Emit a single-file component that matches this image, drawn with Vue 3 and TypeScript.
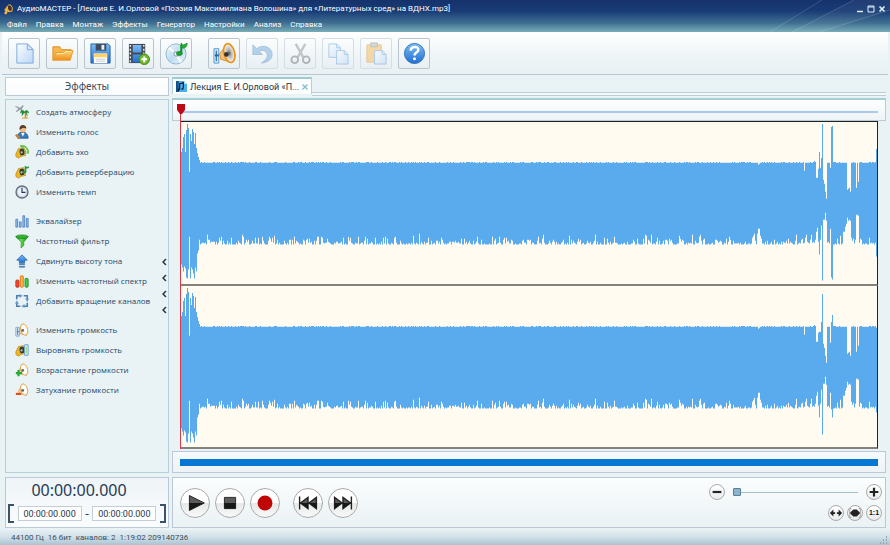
<script setup lang="ts">
import { ref } from 'vue'

interface Tool { id: string; label: string; disabled?: boolean }
interface Effect { icon: string; label: string }
interface Channel { name: string; path: string }
type Column = [number, number]

const menu = ['Файл', 'Правка', 'Монтаж', 'Эффекты', 'Генератор', 'Настройки', 'Анализ', 'Справка']

const toolGroups: Tool[][] = [
  [
    { id: 'new', label: 'Создать' },
    { id: 'open', label: 'Открыть' },
    { id: 'save', label: 'Сохранить' },
    { id: 'video', label: 'Извлечь звук из видео' },
    { id: 'cd', label: 'Загрузить с диска' },
  ],
  [
    { id: 'volume', label: 'Громкость' },
    { id: 'undo', label: 'Отменить', disabled: true },
    { id: 'cut', label: 'Вырезать', disabled: true },
    { id: 'copy', label: 'Копировать', disabled: true },
    { id: 'paste', label: 'Вставить', disabled: true },
    { id: 'help', label: 'Справка' },
  ],
]

const effectGroups: Effect[][] = [
  [
    { icon: 'palm', label: 'Создать атмосферу' },
    { icon: 'person', label: 'Изменить голос' },
    { icon: 'echo', label: 'Добавить эхо' },
    { icon: 'reverb', label: 'Добавить реверберацию' },
    { icon: 'clock', label: 'Изменить темп' },
  ],
  [
    { icon: 'equalizer', label: 'Эквалайзер' },
    { icon: 'funnel', label: 'Частотный фильтр' },
    { icon: 'pitch', label: 'Сдвинуть высоту тона' },
    { icon: 'spectrum', label: 'Изменить частотный спектр' },
    { icon: 'rotate', label: 'Добавить вращение каналов' },
  ],
  [
    { icon: 'vol-change', label: 'Изменить громкость' },
    { icon: 'vol-level', label: 'Выровнять громкость' },
    { icon: 'vol-up', label: 'Возрастание громкости' },
    { icon: 'vol-down', label: 'Затухание громкости' },
  ],
]

const rangeStart = ref('00:00:00.000')
const rangeEnd = ref('00:00:00.000')
const zoom = ref(0)

const WIDTH = 696
const HEIGHT = 162

const intro: Column[] = [
  [30, 143], [26, 146], [15, 150], [12, 145], [30, 147], [8, 156], [2, 157], [6, 148], [50, 115],
  [12, 157], [19, 146], [7, 148], [10, 152], [22, 157], [11, 146], [26, 150], [31, 132], [35, 129], [38, 118],
]

const accents: Record<number, Column> = {
  571: [41, 116], 572: [41, 114], 573: [41, 112], 576: [41, 112], 577: [43, 107], 578: [42, 107], 579: [41, 114], 580: [41, 117],
  623: [49, 121], 633: [39, 121], 635: [56, 110], 636: [56, 106], 637: [47, 120], 638: [30, 133],
  639: [46, 118], 640: [36, 104], 641: [2, 159], 642: [58, 98], 643: [62, 98], 644: [70, 91],
  645: [77, 99], 646: [41, 121], 647: [41, 120], 649: [46, 107], 650: [5, 156], 651: [4, 158],
  656: [41, 117], 659: [41, 114], 662: [41, 110], 663: [41, 110], 664: [41, 105], 665: [41, 102],
  666: [68, 96], 667: [67, 99], 668: [66, 98], 669: [70, 99], 670: [41, 116],
  675: [66, 93], 676: [41, 93], 677: [60, 94], 695: [27, 135],
}

const secondChannel: Record<number, Column> = {
  638: [46, 132], 641: [8, 149], 649: [57, 107], 650: [36, 124], 651: [29, 132], 695: [42, 127],
}

function buildWave(overrides: Record<number, Column>): string {
  let seed = 4217
  const random = (): number => {
    seed = (seed * 16807) % 2147483647
    return seed / 2147483647
  }
  let upper = ''
  let lower = ''
  for (let x = 0; x < WIDTH; x++) {
    const crest = random() > 0.7 ? 40 : 41
    const dip = random() ** 3 * (5 + 7 * random())
    const regular: Column = [crest, 123 - Math.round(dip)]
    const [top, bottom] = overrides[x] ?? accents[x] ?? intro[x] ?? regular
    upper += `V${top}h1`
    lower = `V${bottom}h-1` + lower
  }
  return `M0 80${upper}${lower}z`
}

const channels: Channel[] = [
  { name: 'Левый канал', path: buildWave({}) },
  { name: 'Правый канал', path: buildWave(secondChannel) },
]
</script>

<template>
  <div class="app">
    <svg class="sprite" aria-hidden="true">
      <defs>
        <linearGradient id="g-blue" x1="0" y1="0" x2="0" y2="1"><stop offset="0" stop-color="#7dbcf5" /><stop offset="1" stop-color="#1e6fd2" /></linearGradient>
        <linearGradient id="g-page" x1="0" y1="0" x2="1" y2="1"><stop offset="0" stop-color="#fafdff" /><stop offset="1" stop-color="#bcd7f6" /></linearGradient>
        <linearGradient id="g-orange" x1="0" y1="0" x2="0" y2="1"><stop offset="0" stop-color="#ffd778" /><stop offset="1" stop-color="#ef8d17" /></linearGradient>
        <linearGradient id="g-disc" x1="0" y1="0" x2="1" y2="1"><stop offset="0" stop-color="#f7fbfe" /><stop offset=".5" stop-color="#b9dcf2" /><stop offset="1" stop-color="#f2f7fb" /></linearGradient>
        <linearGradient id="g-green" x1="0" y1="0" x2="1" y2="0"><stop offset="0" stop-color="#0f8d13" /><stop offset=".4" stop-color="#6be34e" /><stop offset="1" stop-color="#0b8714" /></linearGradient>
        <radialGradient id="g-cone"><stop offset="0" stop-color="#555" /><stop offset=".3" stop-color="#aaa" /><stop offset="1" stop-color="#fff" /></radialGradient>
      </defs>
      <symbol id="i-new" viewBox="0 0 24 24"><path d="M4 2h11l6 6v14H4z" fill="url(#g-page)" stroke="#7da8dc" /><path d="M15 2v6h6z" fill="#dcebfb" stroke="#7da8dc" /></symbol>
      <symbol id="i-open" viewBox="0 0 24 24"><path d="M2 19V5h7l2 3h10v4" fill="#f8b64b" stroke="#dd8d25" /><path d="M2 19 5 11h8l2-2h8l-3 10z" fill="url(#g-orange)" stroke="#e89a31" /><path d="m6 12h7l2-2h6" fill="none" stroke="#fff0b5" /></symbol>
      <symbol id="i-save" viewBox="0 0 24 24"><path d="M2 2h18l2 2v18H2z" fill="url(#g-blue)" stroke="#2864a8" /><path d="M7 2h11v7H7z" fill="#3f4d5e" /><path d="M13 3h3v5h-3z" fill="#e8eef5" /><path d="M5 12h14v10H5z" fill="#fff" /><path d="M5 12h14v4H5z" fill="#ffd36c" /><path d="M7 18h10M7 20h10" stroke="#c4cad0" /></symbol>
      <symbol id="i-video" viewBox="0 0 24 24"><path d="M2 2h17v20H2z" fill="#454b55" /><path d="M6 3h9v8H6zM6 13h9v8H6z" fill="url(#g-blue)" /><path d="M3.500 3v19M17.500 3v19" stroke="#e7edf2" stroke-width="1.500" stroke-dasharray="2 2" /><circle cx="18" cy="18" r="5.500" fill="#72b72b" stroke="#3f8613" /><path d="M18 15v6M15 18h6" stroke="#fff" stroke-width="2" /></symbol>
      <symbol id="i-cd" viewBox="0 0 24 24"><circle cx="11.500" cy="12.500" r="10.500" fill="url(#g-disc)" stroke="#8fb4c9" /><path d="m11 12-7-6M11 13l6 8" stroke="#fff" stroke-width="2" /><circle cx="11.500" cy="12.500" r="3.500" fill="#8dadbf" stroke="#eef" /><circle cx="11.500" cy="12.500" r="1.500" fill="#fff" /><path d="M17 3v9" stroke="#128b20" stroke-width="2" /><path d="M17 1c1 4 5 1 6 0 0 4-2 6-6 5z" fill="#25b733" stroke="#128b20" /><ellipse cx="15" cy="12" rx="3" ry="2" fill="#21a52d" stroke="#128b20" /></symbol>
      <symbol id="i-volume" viewBox="0 0 24 24"><path d="M7 12 15 2l3 19-10-3z" fill="#f1c179" stroke="#d98b2c" /><ellipse cx="17" cy="11.500" rx="5.500" ry="10" transform="rotate(-14 17 11.500)" fill="url(#g-cone)" stroke="#e99318" stroke-width="1.800" /><circle cx="14" cy="13" r="2.500" fill="#333" /><path d="M1 7h5v15H1z" fill="#d8ecfa" stroke="#5698ce" /><path d="M3.500 9v11" stroke="#367db9" stroke-width="1.500" /><path d="M2 14h4" stroke="#25619c" stroke-width="2" /></symbol>
      <symbol id="i-undo" viewBox="0 0 24 24"><path d="M2 3v10h10l-4-3c5-3 9 0 9 4 0 3-2 5-6 8 7-1 11-4 11-9C22 5 12 2 6 7z" fill="#76acdf" stroke="#5a91c6" /></symbol>
      <symbol id="i-cut" viewBox="0 0 24 24"><path d="m7 2 8 14M17 2 9 16" stroke="#8d9499" stroke-width="2.400" /><circle cx="6" cy="18.500" r="3.500" fill="none" stroke="#72797f" stroke-width="2" /><circle cx="18" cy="18.500" r="3.500" fill="none" stroke="#72797f" stroke-width="2" /></symbol>
      <symbol id="i-copy" viewBox="0 0 24 24"><path d="M2 2h8l4 4v10H2z" fill="url(#g-page)" stroke="#659fdd" /><path d="M10 2v4h4" fill="none" stroke="#659fdd" /><path d="M10 9h8l4 4v10H10z" fill="url(#g-page)" stroke="#659fdd" /><path d="M18 9v4h4" fill="none" stroke="#659fdd" /></symbol>
      <symbol id="i-paste" viewBox="0 0 24 24"><path d="M2 3h15v18H2z" fill="#f5bb55" stroke="#dc9b35" /><path d="M6 1h7v4H6z" fill="#b7b7b7" stroke="#888" /><path d="M10 9h8l4 4v10H10z" fill="url(#g-page)" stroke="#659fdd" /><path d="M18 9v4h4" fill="none" stroke="#659fdd" /></symbol>
      <symbol id="i-help" viewBox="0 0 24 24"><circle cx="12" cy="12" r="10.500" fill="url(#g-blue)" stroke="#3472bb" /><path d="M8 9c0-5 8-5 8-1 0 3-4 3-4 6" fill="none" stroke="#fff" stroke-width="2.600" /><circle cx="12" cy="17.500" r="1.600" fill="#fff" /></symbol>

      <symbol id="i-palm" viewBox="0 0 16 16"><path d="M1 1l5 2 3-3 1 1-2 3 1 4-1 1-2-4-4 3-1-1 3-3-4-2z" fill="#929da5" /><path d="M10 8c2 2 1 5 1 7h2c0-3 0-5-2-7z" fill="#c78a23" /><path d="M6 9c1-4 4-3 5-1 1-3 4-2 5 1l-3-1 1 4-3-4-3 4V8z" fill="#239331" stroke="#16782a" stroke-width=".5" /><path d="M8 15h7" stroke="#e0b64a" stroke-width="1.500" /></symbol>
      <symbol id="i-person" viewBox="0 0 16 16"><path d="M3 15c0-6 3-7 6-7s6 3 6 7z" fill="#397dbc" stroke="#23588e" /><path d="m7 9 2 4 2-4z" fill="#fff" /><circle cx="9" cy="5" r="3.500" fill="#f1bb86" /><path d="M5 5c0-7 8-6 8-1l-4-1-3 2z" fill="#5c3921" /><path d="m1 11 4 4" stroke="#c3823d" stroke-width="3" /></symbol>
      <symbol id="i-speaker" viewBox="0 0 16 16"><path d="m1 10 3-6 6-1 2 9-5 1-3 2-3-2z" fill="#f2b61b" stroke="#b57c0a" stroke-width=".7" /><ellipse cx="8" cy="8" rx="3.500" ry="4.500" transform="rotate(-14 8 8)" fill="#3b3c31" stroke="#e6c94f" /><circle cx="7.500" cy="8.500" r="1.300" fill="#bac1a8" /></symbol>
      <symbol id="i-echo" viewBox="0 0 16 16"><use href="#i-speaker" /><path d="M7 3.500c4-1 6 3 5 7M6 2c6-2 9 3 8 8M6 .7c7-1 10 4 9.300 9" fill="none" stroke="#58b72d" stroke-width="1.100" /></symbol>
      <symbol id="i-reverb" viewBox="0 0 16 16"><use href="#i-speaker" /><path d="M12 1v7M12 2c1 2 3 1 4 0" fill="none" stroke="#229c35" stroke-width="1.800" /><ellipse cx="11" cy="8" rx="2" ry="1.400" fill="#229c35" /></symbol>
      <symbol id="i-clock" viewBox="0 0 16 16"><circle cx="8" cy="8" r="6.800" fill="#edf2fb" stroke="#626d80" stroke-width="1.600" /><circle cx="8" cy="8" r="5.300" fill="none" stroke="#b8c9dc" /><path d="M8 3.500V9M8 8.500h4" stroke="#293550" stroke-width="1.300" /></symbol>
      <symbol id="i-equalizer" viewBox="0 0 16 16"><path d="M1 6h2v9H1zM5 9h2v6H5zM9 2h2v13H9zM13 5h2v10h-2z" fill="#98c1ef" stroke="#4f83c2" /></symbol>
      <symbol id="i-funnel" viewBox="0 0 16 16"><path d="M1 3c2 2 12 2 14 0l-5 6v4l-3 3V9z" fill="url(#g-green)" stroke="#12871a" stroke-width=".7" /><ellipse cx="8" cy="3" rx="7" ry="2" fill="#36b32d" stroke="#107b20" stroke-width=".7" /></symbol>
      <symbol id="i-pitch" viewBox="0 0 16 16"><path d="m8 1 6 6h-3v3H5V7H2z" fill="url(#g-blue)" stroke="#366da5" /><path d="M5 11h6v1H5zM5 14h6v1H5z" fill="#76a9db" stroke="#4c7cab" /></symbol>
      <symbol id="i-spectrum" viewBox="0 0 16 16"><rect x="1" y="7" width="3.500" height="8" rx="1" fill="#f64b32" stroke="#bd2116" /><rect x="6" y="2" width="3.500" height="13" rx="1" fill="#ffb339" stroke="#e27416" /><rect x="11.500" y="5" width="3.500" height="10" rx="1" fill="#4bca4b" stroke="#188b29" /></symbol>
      <symbol id="i-rotate" viewBox="0 0 16 16"><path d="M2 6V2h4M10 2h4v4M14 10v4h-4M6 14H2v-4" fill="none" stroke="#4d7ead" stroke-width="1.800" /><path d="M5 0l4 2-4 2.500zM16 5l-2 4-2.500-4zM11 16l-4-2 4-2.500zM0 11l2-4 2.500 4z" fill="#6d9cca" /></symbol>
      <symbol id="i-horn" viewBox="0 0 16 16"><path d="m4 9 5-8 4 13-8-2z" fill="#f0ce9b" stroke="#db9946" stroke-width=".8" /><ellipse cx="10.500" cy="7.500" rx="3.800" ry="6.500" transform="rotate(-18 10.500 7.500)" fill="#fffdf8" stroke="#e0a64d" stroke-width="1.100" /><circle cx="8.800" cy="8.500" r="1.600" fill="#666" /></symbol>
      <symbol id="i-vol-change" viewBox="0 0 16 16"><use href="#i-horn" /><path d="M1 5h4v10H1z" fill="#e3f0fa" stroke="#76a9d0" /><path d="M3 6v8M2 10h3" stroke="#397ab5" /></symbol>
      <symbol id="i-vol-level" viewBox="0 0 16 16"><use href="#i-speaker" /><path d="M11 2h4v12h-4z" fill="#d9f3ff" stroke="#5f9ccc" /><path d="M13 4v8" stroke="#8fd07a" /></symbol>
      <symbol id="i-vol-up" viewBox="0 0 16 16"><use href="#i-horn" /><path d="M4 8v7M1 11.500h7" stroke="#24a934" stroke-width="2.500" /></symbol>
      <symbol id="i-vol-down" viewBox="0 0 16 16"><use href="#i-horn" /><path d="M1 12.500h6" stroke="#e64a16" stroke-width="2.500" /></symbol>
    </svg>

    <header class="top">
      <svg class="rays" viewBox="0 0 160 32" preserveAspectRatio="none" aria-hidden="true">
        <path d="M40 32 92 0M62 32 124 0M90 32 160 10" stroke="#fff" stroke-opacity=".16" fill="none" />
        <path d="M62 32 124 0h36v10L90 32z" fill="#fff" fill-opacity=".05" />
      </svg>
      <div class="titlebar">
        <svg class="logo" viewBox="0 0 16 16" aria-hidden="true"><path d="M2 8 6 3l5-2 3 10-7 1-4-1z" fill="#e6a83b" /><ellipse cx="10" cy="6" rx="3.500" ry="5" transform="rotate(-18 10 6)" fill="#4e3420" stroke="#ffd27a" /><circle cx="4" cy="13" r="2" fill="#f5bb48" /><path d="M5 13V7" stroke="#f5bb48" /></svg>
        <h1>АудиоМАСТЕР - [Лекция Е. И.Орловой «Поэзия Максимилиана Волошина» для «Литературных сред» на ВДНХ.mp3]</h1>
        <div class="window-buttons">
          <button type="button" aria-label="Свернуть"><svg viewBox="0 0 8 8"><path d="M1 6.500h6" stroke="currentColor" stroke-width="1.500" /></svg></button>
          <button type="button" aria-label="Развернуть"><svg viewBox="0 0 8 8"><path d="M1 1h6v6H1zM1 2h6" stroke="currentColor" fill="none" /></svg></button>
          <button type="button" aria-label="Закрыть"><svg viewBox="0 0 8 8"><path d="m1.500 1.500 5 5m0-5-5 5" stroke="currentColor" stroke-width="1.700" /></svg></button>
        </div>
      </div>
      <nav class="menu"><a v-for="item in menu" :key="item" href="#">{{ item }}</a></nav>
    </header>

    <div class="toolbar">
      <div v-for="(group, g) in toolGroups" :key="g" class="tool-group">
        <button v-for="tool in group" :key="tool.id" type="button" class="tool" :disabled="tool.disabled" :aria-label="tool.label">
          <svg aria-hidden="true"><use :href="'#i-' + tool.id" /></svg>
        </button>
      </div>
    </div>

    <main class="workspace">
      <aside class="side">
        <h2>Эффекты</h2>
        <div class="effects">
          <ul v-for="(group, g) in effectGroups" :key="g">
            <li v-for="effect in group" :key="effect.label">
              <button type="button"><svg aria-hidden="true"><use :href="'#i-' + effect.icon" /></svg>{{ effect.label }}</button>
            </li>
          </ul>
          <button type="button" class="collapse" aria-label="Скрыть панель">
            <svg v-for="n in 4" :key="n" viewBox="0 0 5 7"><path d="M4 .5 1 3.500l3 3" fill="none" stroke="#26333e" stroke-width="1.500" /></svg>
          </button>
        </div>
        <section class="time">
          <output>00:00:00.000</output>
          <div class="range">
            <span class="bracket"></span>
            <input v-model="rangeStart" aria-label="Начало">
            <span class="dash">-</span>
            <input v-model="rangeEnd" aria-label="Конец">
            <span class="bracket end"></span>
          </div>
        </section>
      </aside>

      <section class="main">
        <div class="tabs">
          <div class="tab">
            <svg class="tab-icon" viewBox="0 0 12 12" aria-hidden="true"><path d="M0 0h9l3 3v9H0z" fill="#46b2f2" /><path d="M0 0h3v12H0z" fill="#14508a" /><path d="M4 9V3l4-1v6" fill="none" stroke="#0b1b2c" stroke-width="1.300" /><path d="M2 9.500h2M6 8.500h2" stroke="#0b1b2c" stroke-width="2" /><path d="M9 0l3 3H9z" fill="#e3f4fd" /></svg>
            <a href="#">Лекция Е. И.Орловой «П...</a>
            <button type="button" aria-label="Закрыть вкладку"><svg viewBox="0 0 6 6"><path d="m.5.5 5 5m0-5-5 5" stroke="#7fbcc7" stroke-width="1.200" /></svg></button>
          </div>
        </div>
        <div class="editor">
          <div class="ruler"><div class="ruler-line"></div></div>
          <div class="channels">
            <svg v-for="channel in channels" :key="channel.name" class="channel" :viewBox="`0 0 ${WIDTH} ${HEIGHT}`" preserveAspectRatio="none" role="img" :aria-label="channel.name">
              <path :d="channel.path" fill="#5aabee" />
            </svg>
          </div>
          <div class="playhead"><svg viewBox="0 0 8 10" aria-hidden="true"><path d="M0 0h8v6L5 10H3L0 6z" fill="#bd0a12" /></svg></div>
        </div>
        <div class="overview"><div class="overview-bar"></div></div>
        <section class="transport">
          <div class="play-buttons">
            <button type="button" aria-label="Воспроизвести"><svg viewBox="0 0 30 30"><path d="M9 7v16l16-8z" fill="#5b5b5b" stroke="#222" /><path d="M9 15h15L9 23z" fill="#171717" /></svg></button>
            <button type="button" aria-label="Стоп"><svg viewBox="0 0 30 30"><path d="M9 9h12v12H9z" fill="#5b5b5b" stroke="#222" /><path d="M9 15h12v6H9z" fill="#171717" /></svg></button>
            <button type="button" aria-label="Запись"><svg viewBox="0 0 30 30"><circle cx="15" cy="15" r="8" fill="#c00507" /></svg></button>
          </div>
          <div class="play-buttons">
            <button type="button" aria-label="В начало"><svg viewBox="0 0 30 30"><path d="M6 8v14M15 9v12l-8-6zM24 9v12l-8-6z" fill="#5b5b5b" stroke="#222" stroke-width="1.500" /><path d="M7 15h8v6zM16 15h8v6z" fill="#171717" /></svg></button>
            <button type="button" aria-label="В конец"><svg viewBox="0 0 30 30"><path d="M24 8v14M15 9v12l8-6zM6 9v12l8-6z" fill="#5b5b5b" stroke="#222" stroke-width="1.500" /><path d="M6 15h8l-8 6zM15 15h8l-8 6z" fill="#171717" /></svg></button>
          </div>
          <div class="zoom">
            <div class="zoom-row">
              <button type="button" aria-label="Уменьшить"><svg viewBox="0 0 16 16"><path d="M3 8h10" stroke="#222" stroke-width="2.500" /></svg></button>
              <input v-model="zoom" type="range" min="0" max="100" aria-label="Масштаб">
              <button type="button" aria-label="Увеличить"><svg viewBox="0 0 16 16"><path d="M3 8h10M8 3v10" stroke="#222" stroke-width="2.500" /></svg></button>
            </div>
            <div class="zoom-row fit">
              <button type="button" aria-label="По ширине"><svg viewBox="0 0 16 16"><path d="m1 8 4-4v3h2v2H5v3zM15 8l-4-4v3H9v2h2v3z" fill="#222" /></svg></button>
              <button type="button" aria-label="По выделению"><svg viewBox="0 0 16 16"><path d="m2 8 4-4h4l4 4-4 4H6z" fill="#222" /><path d="M4 3H2v10h2M12 3h2v10h-2" fill="none" stroke="#999" /></svg></button>
              <button type="button" class="ratio">1:1</button>
            </div>
          </div>
        </section>
      </section>
    </main>

    <footer class="status">
      <span>44100 Гц</span><span>16 бит</span><span>каналов: 2</span><span class="position">1:19:02 209140736</span>
      <svg class="grip" viewBox="0 0 9 9" aria-hidden="true"><path d="M7 1h1M4 4h1M7 4h1M1 7h1M4 7h1M7 7h1" stroke="#8ea6b2" stroke-width="2" /></svg>
    </footer>
  </div>
</template>

<style>
body { margin: 0; }
</style>

<style scoped>
.app {
  display: flex;
  flex-direction: column;
  min-height: 100vh;
  box-sizing: border-box;
  background: #e9f2f4;
  color: #23486a;
  font: 8px/12px Roboto, "Noto Sans", sans-serif;
}
.app *, .app *::before, .app *::after { box-sizing: border-box; }
.sprite { position: absolute; width: 0; height: 0; }
button { margin: 0; padding: 0; border: 0; background: none; color: inherit; font: inherit; }
a { color: inherit; text-decoration: none; }
svg { display: block; flex: none; }
h1, h2, ul { margin: 0; padding: 0; font: inherit; list-style: none; }

.top { position: relative; color: #fff; background: linear-gradient(#15326c, #193c76 35%, #3f6f91 72%, #78adb8); }
.rays { position: absolute; top: 0; right: 0; width: 160px; height: 100%; }
.titlebar { display: flex; align-items: center; height: 18px; padding: 0 4px 0 3px; }
.logo { width: 11px; height: 11px; margin-right: 3px; }
.titlebar h1 { flex: 1; white-space: nowrap; overflow: hidden; }
.window-buttons { position: relative; display: flex; gap: 3px; color: #d8eef5; }
.window-buttons svg { width: 8px; height: 8px; }
.menu { position: relative; display: flex; gap: 9px; height: 14px; padding-left: 7px; line-height: 14px; }

.toolbar { display: flex; gap: 16px; height: 43px; margin: 0 2px; padding: 6px; background: linear-gradient(#fff, #edf4f6 60%, #e9f1f4); border-bottom: 1px solid #b7c5cf; }
.tool-group { display: flex; gap: 6px; }
.tool { display: grid; place-items: center; width: 32px; height: 31px; border: 1px solid #b9c4ce; border-radius: 2px; background: linear-gradient(#fbfdfd, #e8eff2); }
.tool svg { width: 23px; height: 23px; }
.tool:disabled { border-color: #d5dee4; }
.tool:disabled svg { opacity: .5; }

.workspace { flex: 1; display: grid; grid-template-columns: 164px 1fr; gap: 3px; padding: 2px 4px 2px 5px; }
.side, .main { display: flex; flex-direction: column; min-width: 0; }
.side h2 { height: 19px; border: 1px solid #bdc9d4; background: linear-gradient(#fff, #f8fbfc); color: #3c4c5c; text-align: center; font: 10px/17px "Noto Sans", sans-serif; }
.effects { position: relative; flex: 1; display: flex; flex-direction: column; gap: 9px; margin: 3px 0 4px; padding: 2px 0 0 9px; border: 1px solid #b5d0d9; background: #e9f2f4; font-family: "Open Sans", "Noto Sans", sans-serif; }
.effects li button { display: flex; align-items: center; gap: 7px; height: 20px; white-space: nowrap; }
.effects li svg { width: 14px; height: 14px; }
.collapse { position: absolute; top: 50%; right: 1px; display: grid; gap: 9px; transform: translateY(-50%); }
.collapse svg { width: 5px; height: 7px; }
.time { height: 51px; padding: 2px 2px 0; border: 1px solid #b9c9d5; background: linear-gradient(#eef4f7, #fafcfd); }
.time output { display: block; padding-right: 16px; text-align: center; color: #273b56; font: 16px/20px "Noto Sans", sans-serif; }
.range { display: flex; align-items: center; justify-content: space-between; margin-top: 4px; }
.range input { width: 64px; height: 15px; padding: 0; border: 1px solid #c4ced8; background: #fff; color: #26384a; font: 9px/12px Roboto, sans-serif; text-align: center; }
.bracket { width: 6px; height: 19px; border: 2px solid #3c5269; border-right: 0; }
.bracket.end { border-right: 2px solid #3c5269; border-left: 0; }
.dash { font-size: 13px; color: #26384a; }

.tabs { display: flex; height: 19px; }
.tabs::after { content: ""; flex: 1; margin-top: 15px; border: 1px solid #bccdd6; border-width: 1px 0; background: #f4f9fa; }
.tab { display: flex; align-items: center; gap: 3px; height: 17px; padding: 0 3px; border: 1px solid #b5d0d9; border-top: 2px solid #9fcbd0; border-bottom: 0; background: #fcfefe; color: #1f3342; font-size: 9px; white-space: nowrap; }
.tab-icon { width: 11px; height: 11px; }
.tab button svg { width: 6px; height: 6px; }

.editor { position: relative; flex: 1; display: flex; flex-direction: column; margin-top: 2px; }
.ruler { height: 23px; padding: 11px 7px 0 8px; border: 1px solid #b9ccd6; border-top: 2px solid #a5cfd2; background: linear-gradient(#fff, #edf3f6); }
.ruler-line { height: 2px; background: #a9c9ee; }
.channels { flex: 1; display: flex; flex-direction: column; margin: 0 8px; }
.channel { flex: 1 1 0; width: 100%; min-height: 0; border: 1px solid #222; border-left-color: #e58a8a; border-bottom: 2px solid #85817c; background: #fffbf0; }
.channel + .channel { border-top: 0; }
.playhead { position: absolute; top: 6px; bottom: 0; left: 5px; width: 8px; }
.playhead svg { width: 8px; height: 10px; }
.playhead::after { content: ""; position: absolute; top: 10px; bottom: 0; left: 3px; width: 1px; background: #d93a43; }
.overview { height: 22px; margin: 2px 0 4px; padding: 7px; border: 1px solid #bcc8d8; background: linear-gradient(#f7fafc, #edf3f6); }
.overview-bar { height: 7px; background: #0677d2; }

.transport { display: flex; align-items: center; gap: 13px; height: 51px; padding: 0 3px 0 7px; border: 1px solid #bcc8d8; background: linear-gradient(#fbfdfe, #eaf2f4); }
.play-buttons { display: flex; gap: 5px; }
.play-buttons button { width: 30px; height: 30px; border: 1px solid #aaa; border-radius: 50%; background: linear-gradient(#fff 50%, #e5e7e8 50%, #f9f9f9); overflow: hidden; }
.play-buttons svg { width: 28px; height: 28px; }
.zoom { display: flex; flex-direction: column; gap: 5px; margin-left: auto; }
.zoom-row { display: flex; align-items: center; gap: 8px; }
.zoom-row.fit { justify-content: flex-end; gap: 3px; }
.zoom button { display: grid; place-items: center; width: 16px; height: 16px; border: 1px solid #aaa; border-radius: 50%; background: linear-gradient(#fff, #e9ebec); }
.zoom button svg { width: 14px; height: 14px; }
.zoom .ratio { color: #111; font: bold 7px/14px "Liberation Sans", sans-serif; }
.zoom input { appearance: none; width: 125px; height: 8px; margin: 0; background: linear-gradient(#a0bfca, #a0bfca) center / 100% 1px no-repeat; }
.zoom input::-webkit-slider-thumb { appearance: none; width: 8px; height: 8px; border: 1px solid #54809b; border-radius: 1px; background: #8fb4ca; }

.status { display: flex; align-items: center; gap: 4px; height: 15px; padding: 0 2px 0 11px; background: linear-gradient(#e6eff3, #d0dfe7 50%, #a9c3d1); color: #3b4e5e; }
.status .position { flex: 1; }
.grip { width: 9px; height: 9px; align-self: flex-end; }
</style>
